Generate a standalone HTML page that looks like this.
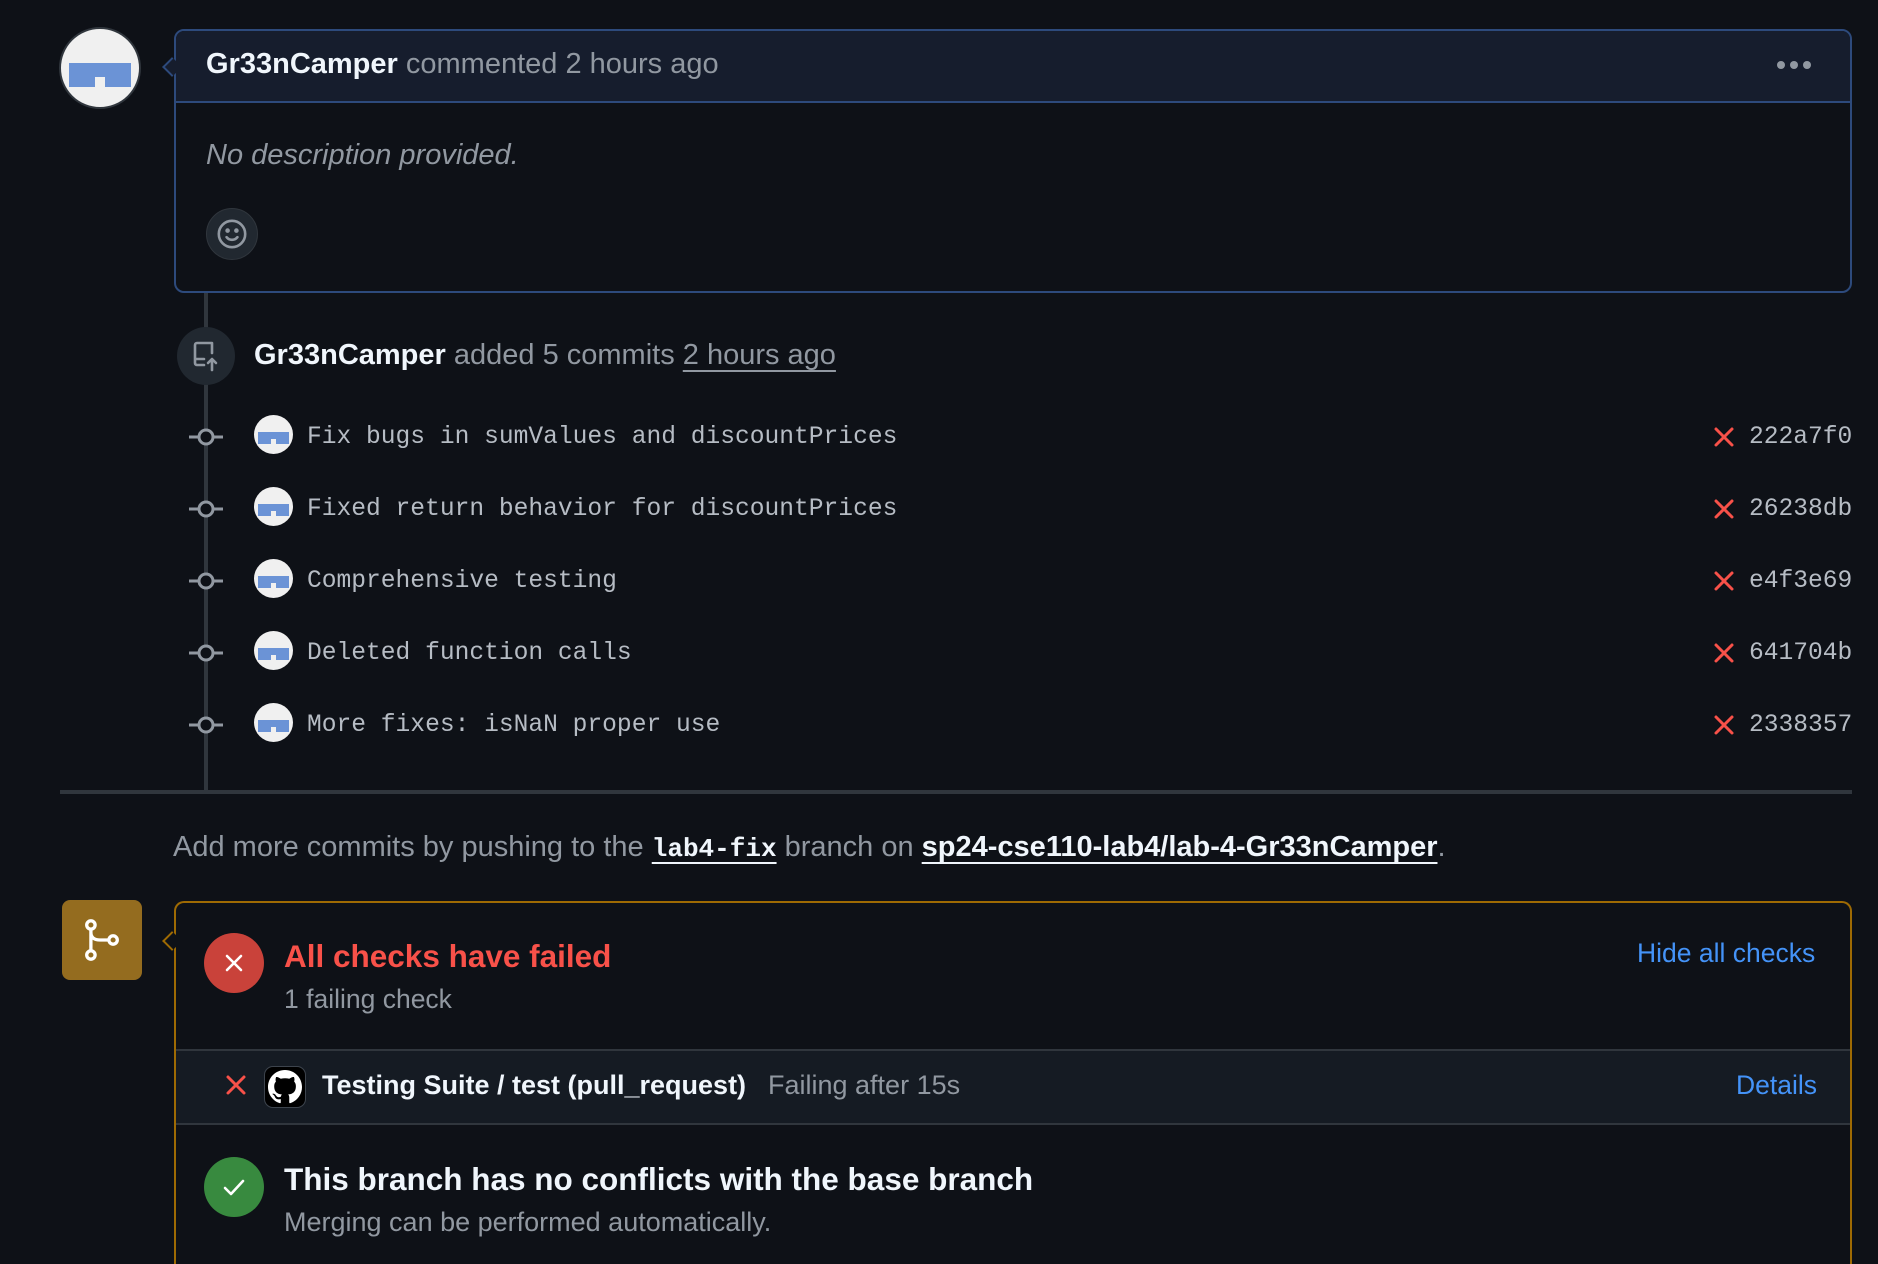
<!DOCTYPE html>
<html style="overflow:hidden;height:1264px"><head><meta charset="utf-8"><style>
*{margin:0;padding:0;box-sizing:border-box}
body{width:1878px;height:1264px;background:#0e1117;font-family:"Liberation Sans",sans-serif;color:#e6edf3;position:relative;overflow:hidden}
.a{position:absolute;white-space:nowrap}
.g{color:#9198a1}
.b{font-weight:bold;color:#f0f6fc}
.mono{font-family:"Liberation Mono",monospace;font-size:24.6px;color:#b6bcc4}
.av{position:absolute;border-radius:50%;background:#f0f0f0;overflow:hidden}
.av i{position:absolute;left:10%;right:10%;top:44%;height:31%;background:#6b93d6}
.av b{position:absolute;left:44%;width:12%;top:62%;height:13%;background:#f0f0f0}
</style></head><body>
<div class="a" style="left:204px;top:292px;width:4px;height:500px;background:#30363d"></div>

<div class="av" style="left:59px;top:27px;width:82px;height:82px;border:2px solid #30363d"><i></i><b></b></div>

<div class="a" style="left:174px;top:29px;width:1678px;height:264px;border:2px solid #2d4a7c;border-radius:10px;overflow:hidden">
 <div style="height:72px;background:#161d2d;border-bottom:2px solid #2d4a7c"></div>
</div>
<div class="a" style="left:165px;top:60px;width:14px;height:14px;background:#161d2d;border-left:2px solid #2d4a7c;border-bottom:2px solid #2d4a7c;transform:rotate(45deg)"></div>
<div class="a" style="left:206px;top:48px;font-size:29px"><span class="b">Gr33nCamper</span> <span class="g">commented 2 hours ago</span></div>
<div class="a" style="left:1777px;top:61px;width:8px;height:8px;border-radius:50%;background:#9198a1"></div>
<div class="a" style="left:1790px;top:61px;width:8px;height:8px;border-radius:50%;background:#9198a1"></div>
<div class="a" style="left:1803px;top:61px;width:8px;height:8px;border-radius:50%;background:#9198a1"></div>
<div class="a g" style="left:206px;top:139px;font-size:29px;font-style:italic">No description provided.</div>
<div class="a" style="left:206px;top:208px;width:52px;height:52px;border-radius:50%;background:#212830;border:1px solid #30363d"></div>
<svg class="a" style="left:216px;top:218px" width="32" height="32" viewBox="0 0 16 16" fill="none" stroke="#9198a1" stroke-width="1.3"><circle cx="8" cy="8" r="6.6"/><path d="M5.3 9.6c.7.9 1.6 1.3 2.7 1.3s2-.4 2.7-1.3" stroke-linecap="round"/><circle cx="5.8" cy="6.3" r=".5" fill="#9198a1"/><circle cx="10.2" cy="6.3" r=".5" fill="#9198a1"/></svg>

<div class="a" style="left:177px;top:327px;width:58px;height:58px;border-radius:50%;background:#212830"></div>
<svg class="a" style="left:190px;top:340px" width="32" height="32" viewBox="0 0 16 16" fill="none" stroke="#9198a1" stroke-width="1.3" stroke-linecap="round" stroke-linejoin="round"><path d="M7 12.5H3.5a1 1 0 0 1-1-1v-9a1 1 0 0 1 1-1h7.5v5"/><path d="M3 9.5h4"/><path d="M11 15V9.5M9 11.5l2-2 2 2"/></svg>
<div class="a" style="left:254px;top:339px;font-size:29px"><span class="b">Gr33nCamper</span> <span class="g">added 5 commits <span style="text-decoration:underline;text-underline-offset:6px">2 hours ago</span></span></div>

<svg class="a" style="left:188px;top:425px" width="36" height="320" fill="none" stroke="#9198a1" stroke-width="3">
 <g><line x1="1" y1="12" x2="35" y2="12"/><circle cx="18" cy="12" r="7" fill="#0e1117"/></g>
 <g transform="translate(0,72)"><line x1="1" y1="12" x2="35" y2="12"/><circle cx="18" cy="12" r="7" fill="#0e1117"/></g>
 <g transform="translate(0,144)"><line x1="1" y1="12" x2="35" y2="12"/><circle cx="18" cy="12" r="7" fill="#0e1117"/></g>
 <g transform="translate(0,216)"><line x1="1" y1="12" x2="35" y2="12"/><circle cx="18" cy="12" r="7" fill="#0e1117"/></g>
 <g transform="translate(0,288)"><line x1="1" y1="12" x2="35" y2="12"/><circle cx="18" cy="12" r="7" fill="#0e1117"/></g>
</svg>

<div class="av" style="left:254px;top:415px;width:39px;height:39px"><i></i><b></b></div>
<div class="a mono" style="left:307px;top:424px">Fix bugs in sumValues and discountPrices</div>
<div class="av" style="left:254px;top:487px;width:39px;height:39px"><i></i><b></b></div>
<div class="a mono" style="left:307px;top:496px">Fixed return behavior for discountPrices</div>
<div class="av" style="left:254px;top:559px;width:39px;height:39px"><i></i><b></b></div>
<div class="a mono" style="left:307px;top:568px">Comprehensive testing</div>
<div class="av" style="left:254px;top:631px;width:39px;height:39px"><i></i><b></b></div>
<div class="a mono" style="left:307px;top:640px">Deleted function calls</div>
<div class="av" style="left:254px;top:703px;width:39px;height:39px"><i></i><b></b></div>
<div class="a mono" style="left:307px;top:712px">More fixes: isNaN proper use</div>

<svg class="a" style="left:1713px;top:426px" width="22" height="310" stroke="#f85149" stroke-width="3" stroke-linecap="round">
 <path d="M3 3l16 16M19 3L3 19"/><path transform="translate(0,72)" d="M3 3l16 16M19 3L3 19"/><path transform="translate(0,144)" d="M3 3l16 16M19 3L3 19"/><path transform="translate(0,216)" d="M3 3l16 16M19 3L3 19"/><path transform="translate(0,288)" d="M3 3l16 16M19 3L3 19"/>
</svg>
<div class="a mono" style="left:1749px;top:424px">222a7f0</div>
<div class="a mono" style="left:1749px;top:496px">26238db</div>
<div class="a mono" style="left:1749px;top:568px">e4f3e69</div>
<div class="a mono" style="left:1749px;top:640px">641704b</div>
<div class="a mono" style="left:1749px;top:712px">2338357</div>

<div class="a" style="left:60px;top:790px;width:1792px;height:4px;background:#30363d"></div>

<div class="a g" style="left:173px;top:831px;font-size:29px">Add more commits by pushing to the <span style="font-family:'Liberation Mono',monospace;font-weight:bold;color:#f0f6fc;font-size:26px;text-decoration:underline;text-underline-offset:6px">lab4-fix</span> branch on <span style="font-weight:bold;color:#f0f6fc;text-decoration:underline;text-underline-offset:6px">sp24-cse110-lab4/lab-4-Gr33nCamper</span>.</div>

<div class="a" style="left:62px;top:900px;width:80px;height:80px;border-radius:8px;background:#946c1f"></div>
<svg class="a" style="left:78px;top:916px" width="48" height="48" viewBox="0 0 16 16" fill="none" stroke="#fff" stroke-width="1.1"><circle cx="4.3" cy="3" r="1.4"/><circle cx="4.3" cy="13" r="1.4"/><circle cx="11.7" cy="8" r="1.4"/><path d="M4.3 4.4v7.2M4.3 5.5c0 1.8 1.3 2.5 3 2.5h3"/></svg>
<div class="a" style="left:174px;top:901px;width:1678px;height:363px;border:2px solid #9e6a03;border-bottom:none;border-radius:10px 10px 0 0;overflow:hidden">
 <div style="position:absolute;left:0;right:0;top:146px;height:76px;background:#151b23;border-top:2px solid #30363d;border-bottom:2px solid #30363d"></div>
</div>
<div class="a" style="left:165px;top:934px;width:14px;height:14px;background:#0e1117;border-left:2px solid #9e6a03;border-bottom:2px solid #9e6a03;transform:rotate(45deg)"></div>

<div class="a" style="left:204px;top:933px;width:60px;height:60px;border-radius:50%;background:#c9423a"></div>
<svg class="a" style="left:222px;top:951px" width="24" height="24" stroke="#fff" stroke-width="2.6" stroke-linecap="round"><path d="M5 5l14 14M19 5L5 19"/></svg>
<div class="a" style="left:284px;top:938px;font-size:31.5px;font-weight:bold;color:#f85149">All checks have failed</div>
<div class="a g" style="left:284px;top:984px;font-size:26.5px">1 failing check</div>
<div class="a" style="left:1637px;top:938px;font-size:26.5px;color:#4493f8">Hide all checks</div>

<svg class="a" style="left:225px;top:1074px" width="22" height="22" stroke="#f85149" stroke-width="3" stroke-linecap="round"><path d="M3 3l16 16M19 3L3 19"/></svg>
<div class="a" style="left:264px;top:1066px;width:42px;height:42px;border-radius:9px;background:#000;border:1px solid #3d444d"></div>
<svg class="a" style="left:268px;top:1070px" width="34" height="34" viewBox="0 0 16 16"><path fill="#fff" d="M8 0C3.58 0 0 3.58 0 8c0 3.540 2.29 6.53 5.47 7.59.4.07.55-.17.55-.38 0-.19-.01-.82-.01-1.49-2.01.37-2.530-.49-2.69-.94-.09-.23-.48-.94-.82-1.13-.28-.15-.68-.52-.01-.53.63-.01 1.08.58 1.23.82.72 1.21 1.87.87 2.33.66.07-.52.28-.87.51-1.07-1.78-.2-3.64-.89-3.64-3.95 0-.87.31-1.59.82-2.15-.08-.2-.36-1.02.08-2.12 0 0 .67-.21 2.2.82.64-.18 1.32-.27 2-.27.68 0 1.36.09 2 .27 1.53-1.04 2.2-.82 2.2-.82.44 1.1.16 1.92.08 2.12.51.56.82 1.27.82 2.15 0 3.07-1.87 3.75-3.65 3.95.29.25.54.73.54 1.48 0 1.07-.01 1.93-.01 2.2 0 .21.15.46.55.38A8.013 8.013 0 0016 8c0-4.42-3.58-8-8-8z"/></svg>
<div class="a b" style="left:322px;top:1070px;font-size:27px">Testing Suite / test (pull_request)</div>
<div class="a g" style="left:768px;top:1070px;font-size:27px">Failing after 15s</div>
<div class="a" style="left:1736px;top:1070px;font-size:26.5px;color:#4493f8">Details</div>

<div class="a" style="left:204px;top:1157px;width:60px;height:60px;border-radius:50%;background:#388a3f"></div>
<svg class="a" style="left:220px;top:1173px" width="28" height="28" fill="none" stroke="#fff" stroke-width="2.6" stroke-linecap="round" stroke-linejoin="round"><path d="M5 15l6 6 12-13"/></svg>
<div class="a b" style="left:284px;top:1161px;font-size:31.5px">This branch has no conflicts with the base branch</div>
<div class="a g" style="left:284px;top:1207px;font-size:27px">Merging can be performed automatically.</div>
</body></html>
